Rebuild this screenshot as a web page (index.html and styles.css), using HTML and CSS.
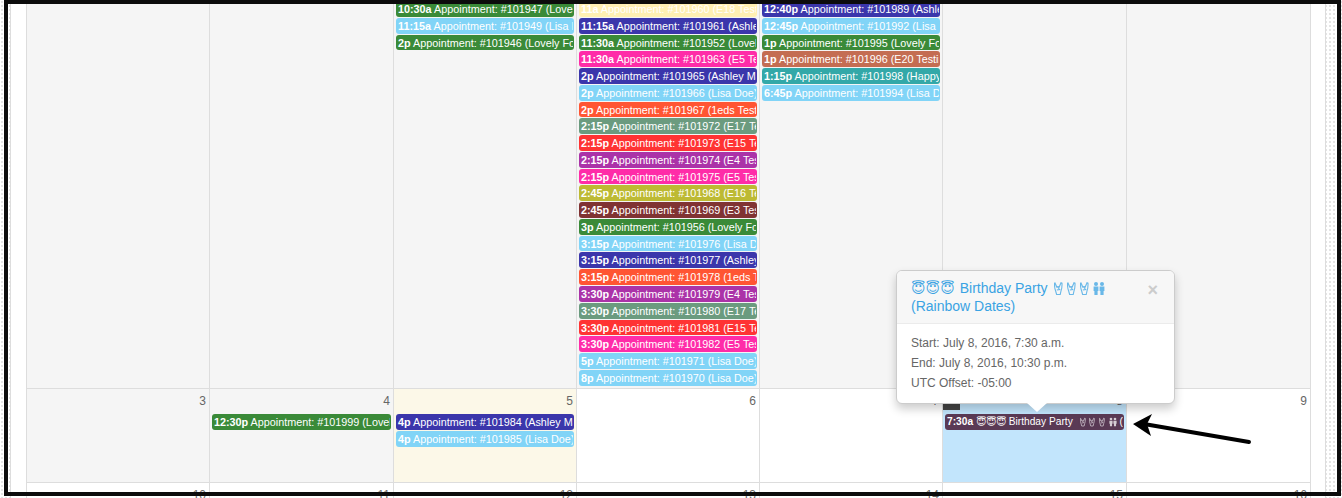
FILE: index.html
```html
<!DOCTYPE html>
<html lang="en">
<head>
  <meta charset="UTF-8" />
  <title>Appointments Calendar</title>
  <link rel="stylesheet" href="styles.css">
</head>
<body>
  <!-- Icons for the emoji that have no plain glyph here -->
  <svg class="icon-defs" width="0" height="0">
    <symbol id="icon-horns" viewBox="0 0 9 13">
      <path d="M1 1 L2.8 5 Q4 4 5.2 5 L7 .8 L8 1.2 Q8.2 6 7 9 L6.2 12.5 H2.6 L1.8 9.5 Q.4 6 .4 1.2 Z M2.8 8 L5.6 7.5 L3.6 5" fill="none" stroke="currentColor" stroke-width="1.1"/>
    </symbol>
    <symbol id="icon-couple" viewBox="0 0 12 13">
      <circle cx="3" cy="2" r="2" fill="currentColor"/>
      <circle cx="9" cy="2" r="2" fill="currentColor"/>
      <path d="M.6 4.5 H5.4 V9 H4.6 V13 H1.4 V9 H.6 Z M6.6 4.5 H11.4 V9 H10.6 V13 H7.4 V9 H6.6 Z" fill="currentColor"/>
    </symbol>
  </svg>

  <div class="panel">
    <div class="calendar">
      <!-- Week 1 -->
      <div class="day past first-week"></div>
      <div class="day past first-week"></div>
      <div class="day past first-week">
        <div class="event green"><b>10:30a</b> Appointment: #101947 (Lovely Foods)</div>
        <div class="event sky"><b>11:15a</b> Appointment: #101949 (Lisa Doe)</div>
        <div class="event green"><b>2p</b> Appointment: #101946 (Lovely Foods)</div>
      </div>
      <div class="day past first-week">
        <div class="event cream"><b>11a</b> Appointment: #101960 (E18 Test)</div>
        <div class="event indigo"><b>11:15a</b> Appointment: #101961 (Ashley Mason)</div>
        <div class="event green"><b>11:30a</b> Appointment: #101952 (Lovely Foods)</div>
        <div class="event pink"><b>11:30a</b> Appointment: #101963 (E5 Test)</div>
        <div class="event indigo"><b>2p</b> Appointment: #101965 (Ashley Mason)</div>
        <div class="event sky"><b>2p</b> Appointment: #101966 (Lisa Doe)</div>
        <div class="event orange"><b>2p</b> Appointment: #101967 (1eds Test)</div>
        <div class="event sage"><b>2:15p</b> Appointment: #101972 (E17 Test)</div>
        <div class="event red"><b>2:15p</b> Appointment: #101973 (E15 Test)</div>
        <div class="event purple"><b>2:15p</b> Appointment: #101974 (E4 Test)</div>
        <div class="event pink"><b>2:15p</b> Appointment: #101975 (E5 Test)</div>
        <div class="event olive"><b>2:45p</b> Appointment: #101968 (E16 Test)</div>
        <div class="event maroon"><b>2:45p</b> Appointment: #101969 (E3 Test)</div>
        <div class="event green"><b>3p</b> Appointment: #101956 (Lovely Foods)</div>
        <div class="event sky"><b>3:15p</b> Appointment: #101976 (Lisa Doe)</div>
        <div class="event indigo"><b>3:15p</b> Appointment: #101977 (Ashley Mason)</div>
        <div class="event orange"><b>3:15p</b> Appointment: #101978 (1eds Test)</div>
        <div class="event purple"><b>3:30p</b> Appointment: #101979 (E4 Test)</div>
        <div class="event sage"><b>3:30p</b> Appointment: #101980 (E17 Test)</div>
        <div class="event red"><b>3:30p</b> Appointment: #101981 (E15 Test)</div>
        <div class="event pink"><b>3:30p</b> Appointment: #101982 (E5 Test)</div>
        <div class="event sky"><b>5p</b> Appointment: #101971 (Lisa Doe)</div>
        <div class="event sky"><b>8p</b> Appointment: #101970 (Lisa Doe)</div>
      </div>
      <div class="day past first-week">
        <div class="event indigo"><b>12:40p</b> Appointment: #101989 (Ashley Mason)</div>
        <div class="event sky"><b>12:45p</b> Appointment: #101992 (Lisa Doe)</div>
        <div class="event green"><b>1p</b> Appointment: #101995 (Lovely Foods)</div>
        <div class="event terracotta"><b>1p</b> Appointment: #101996 (E20 Testing)</div>
        <div class="event teal"><b>1:15p</b> Appointment: #101998 (Happy Days)</div>
        <div class="event sky"><b>6:45p</b> Appointment: #101994 (Lisa Doe)</div>
      </div>
      <div class="day past first-week"></div>
      <div class="day past first-week"></div>

      <!-- Week 2 -->
      <div class="day past second-week"><div class="day-number">3</div></div>
      <div class="day past second-week">
        <div class="day-number">4</div>
        <div class="event green"><b>12:30p</b> Appointment: #101999 (Lovely Foods)</div>
      </div>
      <div class="day today second-week">
        <div class="day-number">5</div>
        <div class="event indigo"><b>4p</b> Appointment: #101984 (Ashley Mason)</div>
        <div class="event sky"><b>4p</b> Appointment: #101985 (Lisa Doe)</div>
      </div>
      <div class="day second-week"><div class="day-number">6</div></div>
      <div class="day second-week"><div class="day-number">7</div></div>
      <div class="day selected second-week">
        <div class="day-number">8</div>
        <div class="drag-handle"></div>
        <div class="event plum">
          <b>7:30a</b> <span class="emoji">😇😇😇</span> Birthday Party
          <svg class="icon-hand"><use href="#icon-horns"/></svg><svg class="icon-hand"><use href="#icon-horns"/></svg><svg class="icon-hand"><use href="#icon-horns"/></svg><svg class="icon-pair"><use href="#icon-couple"/></svg>
          (Rainbow Dates)
        </div>
        <div class="popover">
          <div class="popover-title">
            <a class="popover-link">
              <span class="emoji">😇😇😇</span> Birthday Party
              <svg class="icon-hand"><use href="#icon-horns"/></svg><svg class="icon-hand"><use href="#icon-horns"/></svg><svg class="icon-hand"><use href="#icon-horns"/></svg><svg class="icon-pair"><use href="#icon-couple"/></svg>
              (Rainbow Dates)
            </a>
            <span class="popover-close">×</span>
          </div>
          <div class="popover-body">
            <p>Start: July 8, 2016, 7:30 a.m.</p>
            <p>End: July 8, 2016, 10:30 p.m.</p>
            <p>UTC Offset: -05:00</p>
          </div>
          <div class="popover-arrow"></div>
        </div>
      </div>
      <div class="day second-week"><div class="day-number">9</div></div>

      <!-- Week 3 -->
      <div class="day"><div class="day-number">10</div></div>
      <div class="day"><div class="day-number">11</div></div>
      <div class="day"><div class="day-number">12</div></div>
      <div class="day"><div class="day-number">13</div></div>
      <div class="day"><div class="day-number">14</div></div>
      <div class="day"><div class="day-number">15</div></div>
      <div class="day"><div class="day-number">16</div></div>
    </div>
  </div>

  <!-- Annotation drawn on the screenshot -->
  <svg class="arrow" width="130" height="40" viewBox="0 0 130 40">
    <path d="M119 30 L14 12" stroke="#000" stroke-width="4" stroke-linecap="round" fill="none"/>
    <path d="M3 12 L22 2 L17 12 L21 24 Z" fill="#000"/>
  </svg>
  <div class="frame"></div>
</body>
</html>
```

FILE: styles.css
```css
html, body {
  margin: 0;
  height: 498px;
  overflow: hidden;
}

body {
  font-family: "Liberation Sans", Arial, sans-serif;
  font-size: 12px;
  color: #666;
  background-color: #fff;
  background-image: radial-gradient(#e4e4e4 1px, transparent 1px);
  background-size: 4px 4px;
}

.icon-defs {
  position: absolute;
}

/* White page area */
.panel {
  margin: 0 16px 0 10px;
  height: 498px;
  padding: 0 14px 0 15px;
  background: #fff;
  border-left: 1px solid #ddd;
  border-right: 1px solid #ddd;
  overflow: hidden;
}

/* Month grid */
.calendar {
  display: grid;
  grid-template-columns: 183px 184px 183px 183px 183px 184px 184px;
  grid-template-rows: 389px 94px 94px;
  border-right: 1px solid #ddd;
}

.day {
  position: relative;
  min-width: 0;
  border-left: 1px solid #ddd;
  border-bottom: 1px solid #ddd;
  padding: 0 2px;
  box-sizing: border-box;
}

.past { background: #f5f5f5; }
.today { background: #fcf8e8; }
.selected { background: #c2e5fc; }

.first-week { padding-top: 1px; }

.day-number {
  height: 25px;
  line-height: 24px;
  text-align: right;
  padding-right: 1px;
}

.drag-handle {
  position: absolute;
  left: 0;
  top: 6px;
  width: 17px;
  height: 15px;
  background: #444;
}

/* Events */
.event {
  box-sizing: border-box;
  height: 15.77px;
  line-height: 14px;
  margin-bottom: 1px;
  border: 1px solid transparent;
  border-radius: 3px;
  padding: 0 1px;
  font-size: 10.8px;
  color: #fff;
  white-space: nowrap;
  overflow: hidden;
}

.green { background: #3a8a38; }
.sky { background: #81d4f7; }
.indigo { background: #3b36ab; }
.pink { background: #ff2ca8; }
.orange { background: #ff5533; }
.sage { background: #6b9b7f; }
.red { background: #ff3333; }
.purple { background: #ab33a8; }
.olive { background: #bdba33; }
.maroon { background: #803333; }
.teal { background: #33a8a8; }
.terracotta { background: #c46d52; }
.cream { background: #fff0b3; }
.plum { background: #5a3a55; font-size: 10.2px; }

.emoji { font-family: "DejaVu Sans", sans-serif; }
.plum .emoji { font-size: 9.6px; }
.popover-link .emoji { margin-right: 1px; }

/* Drawn emoji, sized per context below */
.icon-hand,
.icon-pair {
  display: inline-block;
  vertical-align: -2px;
  opacity: 0.75;
}

.event .icon-hand {
  width: 6px;
  height: 10px;
  margin-right: 3.7px;
}

.event .icon-hand:first-of-type { margin-left: 4px; }

.event .icon-pair {
  width: 8px;
  height: 10px;
}

.popover-link .icon-hand {
  width: 9px;
  height: 13px;
  margin-right: 4px;
}

.popover-link .icon-hand:first-of-type { margin-left: 2px; }

.popover-link .icon-pair {
  width: 12px;
  height: 13px;
}

/* Popover */
.popover {
  position: absolute;
  z-index: 2;
  left: -47px;
  top: -119px;
  width: 279px;
  background: #fff;
  border: 1px solid #ccc;
  border-radius: 6px;
  box-shadow: 0 5px 10px rgba(0, 0, 0, 0.2);
  box-sizing: border-box;
}

.popover-title {
  display: flex;
  justify-content: space-between;
  gap: 20px;
  padding: 8px 14px;
  background: #f7f7f7;
  border-bottom: 1px solid #ebebeb;
  border-radius: 5px 5px 0 0;
  font-size: 14px;
  line-height: 18px;
}

.popover-link { color: #3aa3e3; }

.popover-close {
  color: #ccc;
  font-size: 18px;
  font-weight: bold;
  line-height: 22px;
  padding-right: 2px;
}

.popover-body {
  padding: 9px 14px 10px;
}

.popover-body p {
  margin: 0;
  line-height: 20px;
}

.popover-arrow {
  position: absolute;
  left: 130px;
  bottom: -9px;
  width: 0;
  height: 0;
  border-left: 10px solid transparent;
  border-right: 10px solid transparent;
  border-top: 9px solid #fff;
}

/* Overlays */
.arrow {
  position: absolute;
  left: 1130px;
  top: 412px;
}

.frame {
  position: absolute;
  left: 4px;
  top: 0;
  width: 1337px;
  height: 496px;
  border: 4px solid #0c0c0c;
  box-sizing: border-box;
  pointer-events: none;
}
```
